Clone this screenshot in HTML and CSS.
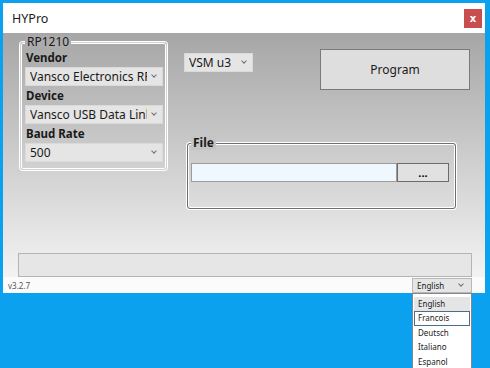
FILE: index.html
```html
<!DOCTYPE html>
<html lang="en">
<head>
    <meta charset="UTF-8">
    <title>HYPro</title>
    <link rel="stylesheet" href="styles.css">
</head>
<body>
    <div class="window">
        <div class="titlebar">
            <span class="title">HYPro</span>
            <button class="close">x</button>
        </div>

        <div class="content">
            <div class="main-row">
                <fieldset class="group rp-group">
                    <legend>RP1210</legend>
                    <label class="field-label">Vendor</label>
                    <div class="combo"><span>Vansco Electronics RP1210</span></div>
                    <label class="field-label">Device</label>
                    <div class="combo"><span>Vansco USB Data Link Adapter</span></div>
                    <label class="field-label">Baud Rate</label>
                    <div class="combo"><span>500</span></div>
                </fieldset>

                <div class="right-col">
                    <div class="top-row">
                        <div class="combo vsm"><span>VSM u3</span></div>
                        <button class="program">Program</button>
                    </div>
                    <fieldset class="group file-group">
                        <legend>File</legend>
                        <div class="file-row">
                            <input type="text" class="file-path">
                            <button class="browse">...</button>
                        </div>
                    </fieldset>
                </div>
            </div>
            <div class="progress"></div>
        </div>

        <div class="statusbar">
            <span class="version">v3.2.7</span>
            <div class="lang">
                <div class="combo lang-combo"><span>English</span></div>
                <ul class="lang-list">
                    <li class="hover">English</li>
                    <li class="selected">Francois</li>
                    <li>Deutsch</li>
                    <li>Italiano</li>
                    <li>Espanol</li>
                </ul>
            </div>
        </div>
    </div>
</body>
</html>
```

FILE: styles.css
```css
html, body {
    height: 100%;
    overflow: hidden;
}

body {
    margin: 0;
    padding: 3px;
    box-sizing: border-box;
    background-color: #0ba1ef;
    font-family: "Noto Sans", "Open Sans", sans-serif;
    font-size: 12px;
    color: #1a1a1a;
}

.window {
    width: 482px;
    height: 290px;
    background-color: #fff;
    display: flex;
    flex-direction: column;
}

.titlebar {
    height: 30px;
    flex-shrink: 0;
    display: flex;
    align-items: center;
    justify-content: space-between;
    padding: 0 3px 0 9px;
}

.title {
    font-size: 12.5px;
}

.close {
    width: 18px;
    height: 19px;
    padding: 0;
    border: none;
    background-color: #c84f4f;
    color: #fff;
    font-family: "DejaVu Sans", sans-serif;
    font-size: 10px;
    font-weight: bold;
    line-height: 19px;
}

.content {
    flex: 1;
    display: flex;
    flex-direction: column;
    background: linear-gradient(#a6a6a6, #f3f3f3);
}

.main-row {
    display: flex;
    align-items: flex-start;
    padding-left: 17px;
}

/* group boxes: grey line between two white ones */
.group {
    margin: 0;
    min-width: 0;
    border: 1px solid #d2d2d2;
    border-radius: 3px;
    box-shadow: 0 0 0 1px #fff, inset 0 0 0 1px #fff;
}

.group legend {
    padding: 0 2px;
    line-height: 12px;
}

.rp-group {
    margin-top: 3px;
    width: 138px;
    padding: 0 3px 7px 4px;
}

.rp-group legend {
    background-color: #acacac;
}

.field-label {
    display: block;
    font-weight: bold;
    font-size: 11.5px;
    line-height: 19px;
    padding-left: 1px;
}

.combo {
    height: 19px;
    box-sizing: border-box;
    display: flex;
    align-items: center;
    background-color: #e5e5e5;
    border: 1px solid #dadada;
    padding-left: 4px;
}

.combo span {
    flex: 1;
    overflow: hidden;
    white-space: nowrap;
}

.combo::after {
    content: "";
    width: 3px;
    height: 3px;
    border-right: 1px solid #707070;
    border-bottom: 1px solid #707070;
    transform: rotate(45deg);
    margin: -3px 6px 0 5px;
}

.right-col {
    width: 286px;
    margin-left: 17px;
    padding-top: 16px;
}

.top-row {
    display: flex;
    justify-content: space-between;
    align-items: flex-start;
}

.vsm {
    width: 69px;
    margin-top: 4px;
}

.program {
    width: 150px;
    height: 41px;
    border: 1px solid #7a7a7a;
    background-color: #dedede;
    font-family: inherit;
    font-size: 12px;
    color: #1a1a1a;
}

.file-group {
    margin: 46px 0 0 3px;
    width: 258px;
    padding: 0 6px 26px 3px;
    border-color: #6e6e6e;
}

.file-group legend {
    font-weight: bold;
    line-height: 14px;
    background-color: #c5c5c5;
}

.file-row {
    display: flex;
    padding-top: 13px;
}

.file-path {
    width: 206px;
    height: 19px;
    box-sizing: border-box;
    margin: 0;
    border: 1px solid #9c9c9c;
    background-color: #f0f8ff;
}

.browse {
    width: 52px;
    height: 19px;
    padding: 0;
    border: 1px solid #6c6c6c;
    background-color: #e1e1e1;
    font-family: inherit;
    font-weight: bold;
    font-size: 11px;
    line-height: 10px;
}

.progress {
    margin: auto 13px 0 15px;
    height: 24px;
    box-sizing: border-box;
    border: 1px solid #b4b4b4;
    background-color: #e6e6e6;
}

.statusbar {
    height: 16px;
    flex-shrink: 0;
    display: flex;
    align-items: center;
    justify-content: space-between;
    padding: 0 13px 0 5px;
    background-color: #fbfbfb;
}

.version {
    font-size: 8px;
    color: #555;
}

.lang {
    position: relative;
}

.lang-combo {
    width: 60px;
    height: 15px;
    font-size: 8px;
    border-color: #b8b8b8;
    padding-left: 4px;
}

.lang-combo::after {
    margin-right: 8px;
}

.lang-list {
    position: absolute;
    top: 100%;
    left: 0;
    width: 60px;
    box-sizing: border-box;
    margin: 0;
    padding: 3px 1px 1px;
    list-style: none;
    background-color: #fff;
    border: 1px solid #828790;
    font-size: 8px;
}

.lang-list li {
    line-height: 12.5px;
    padding-left: 3px;
    border: 1px solid transparent;
}

.lang-list .hover {
    background-color: #e5e5e5;
}

.lang-list .selected {
    border-color: #4b6d86;
}
```
